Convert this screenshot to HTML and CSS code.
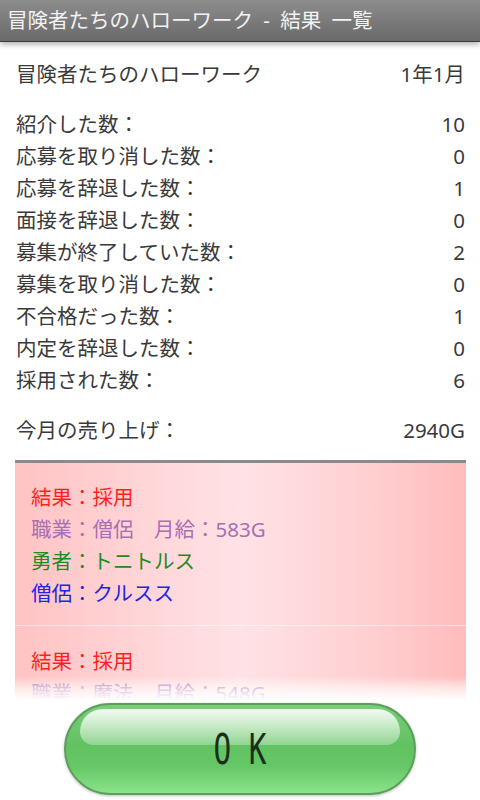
FILE: index.html
```html
<!DOCTYPE html>
<html lang="ja">
<head>
  <meta charset="UTF-8" />
  <meta name="viewport" content="width=device-width, initial-scale=1.0"/>
  <title>冒険者たちのハローワーク - 結果 一覧</title>
  <link rel="stylesheet" href="styles.css">
</head>
<body>

  <div class="screen">
    <div class="titlebar">冒険者たちのハローワーク - 結果 一覧</div>

    <div class="scroller">
      <div class="content">
        <div class="row header-row">
          <span>冒険者たちのハローワーク</span>
          <span>1年1月</span>
        </div>

        <!-- Monthly stats -->
        <div class="stats">
          <div class="row"><span>紹介した数：</span><span>10</span></div>
          <div class="row"><span>応募を取り消した数：</span><span>0</span></div>
          <div class="row"><span>応募を辞退した数：</span><span>1</span></div>
          <div class="row"><span>面接を辞退した数：</span><span>0</span></div>
          <div class="row"><span>募集が終了していた数：</span><span>2</span></div>
          <div class="row"><span>募集を取り消した数：</span><span>0</span></div>
          <div class="row"><span>不合格だった数：</span><span>1</span></div>
          <div class="row"><span>内定を辞退した数：</span><span>0</span></div>
          <div class="row"><span>採用された数：</span><span>6</span></div>
        </div>

        <div class="row sales-row">
          <span>今月の売り上げ：</span>
          <span>2940G</span>
        </div>

        <!-- Result list -->
        <div class="results">
          <div class="result">
            <div class="result-status">結果：採用</div>
            <div class="result-job">職業：僧侶　月給：583G</div>
            <div class="result-hero">勇者：トニトルス</div>
            <div class="result-member">僧侶：クルスス</div>
          </div>
          <div class="result">
            <div class="result-status">結果：採用</div>
            <div class="result-job">職業：魔法　月給：548G</div>
          </div>
        </div>
      </div>
      <div class="fade"></div>
    </div>

    <div class="footer">
      <button class="ok-button" type="button"><span class="ok-label">O K</span></button>
    </div>
  </div>

</body>
</html>
```

FILE: styles.css
```css
body {
  margin: 0;
  background-color: #fff;
  font-family: 'Noto Sans', 'Noto Sans CJK JP', sans-serif;
  color: #3a3a3a;
}

.screen {
  display: flex;
  flex-direction: column;
  width: 480px;
  height: 800px;
  overflow: hidden;
}

.titlebar {
  position: relative;
  z-index: 1;
  flex: 0 0 auto;
  height: 41px;
  line-height: 41px;
  padding-left: 7px;
  font-size: 20.5px;
  word-spacing: 5px;
  color: #f2f2f2;
  background: linear-gradient(#8d8d8d, #777 60%, #6a6a6a);
  border-bottom: 1px solid #3c3c3c;
  box-shadow: 0 2px 6px rgba(0,0,0,0.35);
  white-space: nowrap;
}

.scroller {
  position: relative;
  flex: 1;
  overflow: hidden;
}

.content {
  padding: 16px 15px 0 16px;
}

.row {
  display: flex;
  justify-content: space-between;
  height: 32px;
  line-height: 32px;
  font-size: 20.5px;
}

.stats {
  margin-top: 18px;
}

.sales-row {
  margin-top: 18px;
}

.results {
  margin: 14px -1px 0 -1px;
  border-top: 3px solid #8a8a8a;
  background: linear-gradient(to right, #ffc3c3, #ffd6d8 30%, #ffe2e6 50%, #ffd2d4 75%, #ffbcbc);
}

.result {
  padding: 18px 16px 16px 16px;
  font-size: 20.5px;
  line-height: 32px;
}

.result + .result {
  border-top: 1px solid rgba(255,255,255,0.55);
  padding-top: 19px;
}

.result-status {
  color: #ff1f1f;
}

.result-job {
  color: #a86fb2;
}

.result-hero {
  color: #1f8a1f;
}

.result-member {
  color: #2323e6;
}

.fade {
  position: absolute;
  left: 0;
  right: 0;
  bottom: 0;
  height: 24px;
  background: linear-gradient(rgba(255,255,255,0), rgba(255,255,255,0.6) 50%, #fff);
}

.footer {
  flex: 0 0 auto;
  display: flex;
  justify-content: center;
  padding: 3px 0 5px 0;
}

.ok-button {
  position: relative;
  width: 352px;
  height: 92px;
  border: 2px solid #5c9f5c;
  border-radius: 46px;
  background: linear-gradient(#78cf78, #62c262 45%, #66c766 70%, #8be48b);
  box-shadow: 0 1px 3px rgba(0,0,0,0.25);
  cursor: pointer;
  padding: 0;
}

.ok-button::before {
  content: "";
  position: absolute;
  top: 4px;
  left: 14px;
  right: 14px;
  height: 36px;
  border-radius: 30px 30px 18px 18px;
  background: linear-gradient(rgba(255,255,255,0.9), rgba(255,255,255,0.3));
}

.ok-label {
  position: relative;
  display: inline-block;
  font-family: 'DejaVu Sans Mono', monospace;
  font-size: 42px;
  color: #1a2f1a;
  transform: scaleX(0.7);
  white-space: pre;
}
```
